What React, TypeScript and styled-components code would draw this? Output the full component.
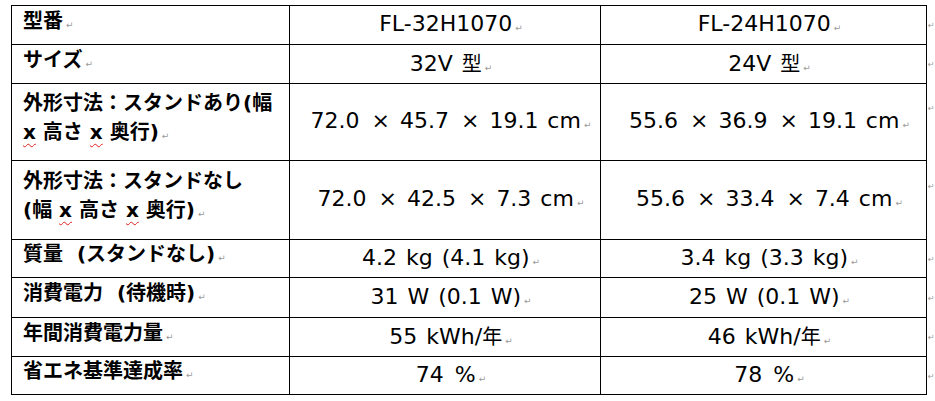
import React from 'react';
import styled, { createGlobalStyle } from 'styled-components';

const GlobalStyle = createGlobalStyle`
	html, body {
		margin: 0;
		padding: 0;
		background: #fff;
	}
`;

const ROW_HEIGHTS = [39, 39, 77, 79, 38, 40, 39, 38];
const rowTemplate = ROW_HEIGHTS.map((h) => `${h}px`).join(' ');

const Page = styled.div`
	display: flex;
	align-items: flex-start;
	width: 935px;
	height: 401px;
	padding: 5px 0 0 11px;
	box-sizing: border-box;
	overflow: hidden;
	background: #fff;
	color: #000;
`;

const SpecTable = styled.div`
	display: grid;
	grid-template-columns: 278px 311px 326px;
	grid-template-rows: ${rowTemplate};
	border-top: 1px solid #000;
	border-left: 1px solid #000;
`;

const Cell = styled.div`
	display: flex;
	align-items: center;
	box-sizing: border-box;
	border-right: 1px solid #000;
	border-bottom: 1px solid #000;
	line-height: 29px;
	white-space: pre;
`;

const LabelCell = styled(Cell)`
	padding: 0 4px 4px 11px;
	font-family: 'DejaVu Sans', 'Noto Sans CJK JP', sans-serif;
	font-weight: 700;
	font-size: 20px;
`;

const ValueCell = styled(Cell)`
	justify-content: center;
	padding: 2px 4px 0 16px;
	font-family: 'DejaVu Sans', 'Noto Sans CJK JP', sans-serif;
	font-size: 22px;
	word-spacing: 2px;
`;

const Kanji = styled.span`
	font-family: 'Noto Sans CJK JP', sans-serif;
	font-size: 20px;
`;

const Times = styled.span`
	margin: 0 10px 0 12px;
`;

const Typo = styled.span`
	text-decoration: underline wavy #e02020;
	text-decoration-thickness: 1px;
	text-underline-offset: 4px;
	text-decoration-skip-ink: none;
`;

const ParaMark = styled.span`
	margin-left: 3px;
	font-family: 'DejaVu Sans', sans-serif;
	font-size: 9px;
	font-weight: 400;
	word-spacing: 0;
	color: #9a9a9a;
`;

const MarkColumn = styled.div`
	display: grid;
	grid-template-rows: ${rowTemplate};
	padding-top: 1px;
	width: 8px;
`;

const RowMark = styled.div<{ $lines: number }>`
	display: flex;
	flex-direction: column;
	justify-content: center;
	padding: 0 0 ${(p) => (p.$lines > 1 ? 29 : 0)}px 1px;
	line-height: 29px;
	font-family: 'DejaVu Sans', sans-serif;
	font-size: 8px;
	color: #9a9a9a;
`;

const dims = (w: string, h: string, d: string) => (
	<>
		{w}
		<Times>×</Times>
		{h}
		<Times>×</Times>
		{d} cm
	</>
);

type Spec = {
	label: React.ReactNode;
	lines: number;
	a: React.ReactNode;
	b: React.ReactNode;
};

const specs: Spec[] = [
	{ label: '型番', lines: 1, a: 'FL-32H1070', b: 'FL-24H1070' },
	{
		label: 'サイズ',
		lines: 1,
		a: <>32V <Kanji>型</Kanji></>,
		b: <>24V <Kanji>型</Kanji></>,
	},
	{
		label: (
			<>
				外形寸法：スタンドあり(幅
				<br />
				<Typo>x</Typo> 高さ <Typo>x</Typo> 奥行)
			</>
		),
		lines: 2,
		a: dims('72.0', '45.7', '19.1'),
		b: dims('55.6', '36.9', '19.1'),
	},
	{
		label: (
			<>
				外形寸法：スタンドなし
				<br />
				(幅 <Typo>x</Typo> 高さ <Typo>x</Typo> 奥行)
			</>
		),
		lines: 2,
		a: dims('72.0', '42.5', '7.3'),
		b: dims('55.6', '33.4', '7.4'),
	},
	{ label: '質量  (スタンドなし)', lines: 1, a: '4.2 kg (4.1 kg)', b: '3.4 kg (3.3 kg)' },
	{ label: '消費電力  (待機時)', lines: 1, a: '31 W (0.1 W)', b: '25 W (0.1 W)' },
	{
		label: '年間消費電力量',
		lines: 1,
		a: <>55 kWh/<Kanji>年</Kanji></>,
		b: <>46 kWh/<Kanji>年</Kanji></>,
	},
	{ label: '省エネ基準達成率', lines: 1, a: '74\u2002%', b: '78\u2002%' },
];

export default function App() {
	return (
		<>
			<GlobalStyle />
			<Page>
				<SpecTable>
					{specs.map((s, i) => (
						<React.Fragment key={i}>
							<LabelCell>
								<span>
									{s.label}
									<ParaMark>↵</ParaMark>
								</span>
							</LabelCell>
							<ValueCell>
								<span>
									{s.a}
									<ParaMark>↵</ParaMark>
								</span>
							</ValueCell>
							<ValueCell>
								<span>
									{s.b}
									<ParaMark>↵</ParaMark>
								</span>
							</ValueCell>
						</React.Fragment>
					))}
				</SpecTable>
				<MarkColumn>
					{specs.map((s, i) => (
						<RowMark key={i} $lines={s.lines}>
							↵
						</RowMark>
					))}
				</MarkColumn>
			</Page>
		</>
	);
}
